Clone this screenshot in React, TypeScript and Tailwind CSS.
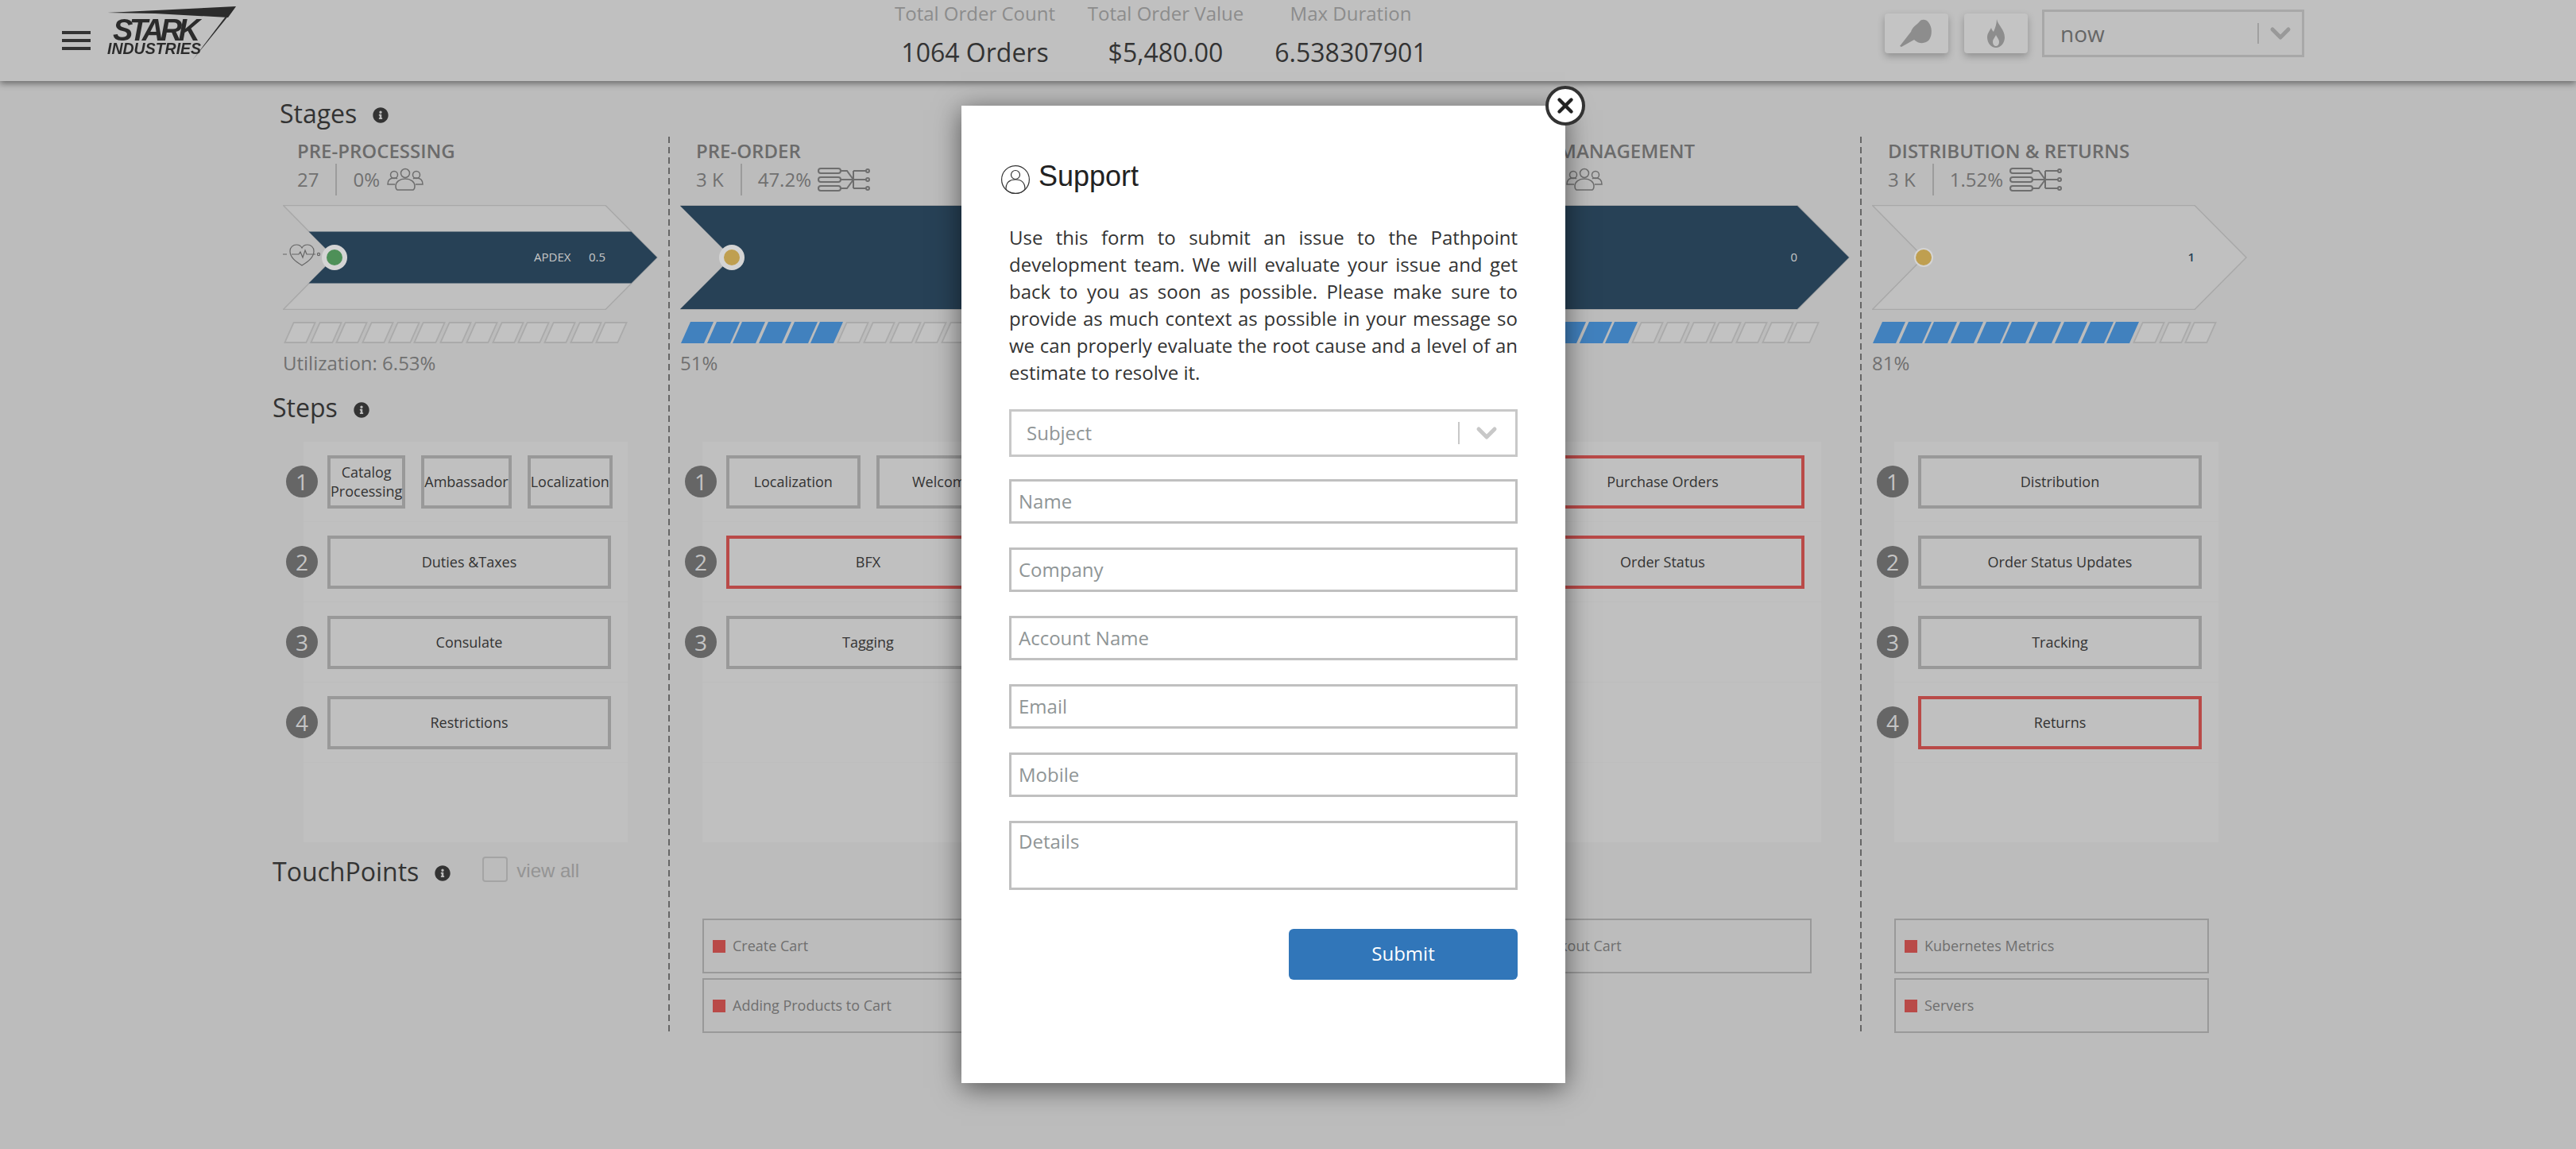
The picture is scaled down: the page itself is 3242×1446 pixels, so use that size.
// App.tsx
import { ChevronDown, X } from 'lucide-react'
import { FaInfoCircle } from 'react-icons/fa'

interface Stage {
  title: string
  titleClass: string
  count: string
  pct: string
  statsClass: string
  icon: 'people' | 'nodes'
  band: number
  dot: string
  ring: number
  value: string
  apdex?: boolean
  blue: number
  label: string
  steps: string[][]
  stepsRed: string[]
  panelClass: string
  touch: string[]
}

const STAGES: (Stage | null)[] = [
  {
    title: 'PRE-PROCESSING', titleClass: 'pl-[33px]', count: '27', pct: '0%', statsClass: 'pl-[33px]', icon: 'people',
    band: 0.5, dot: '#4e9058', ring: 16, value: '0.5', apdex: true, blue: 0, label: 'Utilization: 6.53%',
    steps: [['Catalog Processing', 'Ambassador', 'Localization'], ['Duties &Taxes'], ['Consulate'], ['Restrictions']],
    stepsRed: [], panelClass: 'ml-[41px]', touch: [],
  },
  {
    title: 'PRE-ORDER', titleClass: 'pl-[35px]', count: '3 K', pct: '47.2%', statsClass: 'pl-[35px]', icon: 'nodes',
    band: 1, dot: '#bf9f50', ring: 16, value: '', blue: 6, label: '51%',
    steps: [['Localization', 'Welcome'], ['BFX'], ['Tagging']],
    stepsRed: ['BFX'], panelClass: 'ml-[43px]', touch: ['Create Cart', 'Adding Products to Cart'],
  },
  null,
  {
    title: 'ORDER MANAGEMENT', titleClass: 'pl-[34px]', count: '3 K', pct: '0%', statsClass: 'pl-[10px]', icon: 'people',
    band: 1, dot: '#bf9f50', ring: 16, value: '0', blue: 6, label: '',
    steps: [['Purchase Orders'], ['Order Status']],
    stepsRed: ['Purchase Orders', 'Order Status'], panelClass: 'ml-[43px]', touch: ['Checkout Cart'],
  },
  {
    title: 'DISTRIBUTION & RETURNS', titleClass: 'pl-[35px]', count: '3 K', pct: '1.52%', statsClass: 'pl-[35px]', icon: 'nodes',
    band: 0, dot: '#bf9f50', ring: 12, value: '1', blue: 10, label: '81%',
    steps: [['Distribution'], ['Order Status Updates'], ['Tracking'], ['Returns']],
    stepsRed: ['Returns'], panelClass: 'ml-[43px]', touch: ['Kubernetes Metrics', 'Servers'],
  },
]

function PeopleIcon() {
  return (
    <svg width="46" height="30" viewBox="0 0 46 30" fill="none" stroke="#6e6e6e" strokeWidth="1.5" className="ml-[9px]">
      <circle cx="23" cy="7" r="5.5" />
      <circle cx="9" cy="9" r="4.5" />
      <circle cx="37" cy="9" r="4.5" />
      <path d="M13 28c-2-1-2-3-2-5 0-5 5-9 12-9s12 4 12 9c0 2 0 4-2 5z" fill="#bcbcbc" />
      <path d="M10 21H1c0-5 3-8 8-8 2 0 3 0 4 1" />
      <path d="M36 21h9c0-5-3-8-8-8-2 0-3 0-4 1" />
    </svg>
  )
}

function NodesIcon() {
  return (
    <svg width="66" height="30" viewBox="0 0 66 30" fill="none" stroke="#6e6e6e" strokeWidth="2" className="ml-[8px]">
      <rect x="1" y="1" width="28" height="6" rx="3" />
      <rect x="1" y="12" width="28" height="6" rx="3" />
      <rect x="1" y="23" width="28" height="6" rx="3" />
      <path d="M29 4h8l8 11h16M29 15h32M29 26h8l8-11M45 4h16M45 26h16M45 4v22" />
      <circle cx="63" cy="4" r="2" />
      <circle cx="63" cy="15" r="2" />
      <circle cx="63" cy="26" r="2" />
    </svg>
  )
}

function HeartIcon() {
  return (
    <svg width="48" height="34" viewBox="0 0 48 34" fill="none" stroke="#666" strokeWidth="1.2" className="absolute left-0 top-[47px]">
      <path d="M24 29C16 24 9 19 9 11c0-5 4-8 8-8 3 0 6 2 7 4 1-2 4-4 7-4 4 0 8 3 8 8 0 8-7 13-15 18z" />
      <path d="M0 15h5M11 15h9l2-3 3 7 3-9 2 5h11" />
      <circle cx="45" cy="15" r="1.6" />
    </svg>
  )
}

function InfoIcon() {
  return <FaInfoCircle className="text-[#333] text-[20px]" />
}

function Arrow({ stage }: { stage: Stage }) {
  const y0 = 65 * (1 - stage.band)
  const band = `${y0},${y0 + 1} ${406 + y0},${y0 + 1} 471,66 ${406 + y0},${131 - y0} ${y0},${131 - y0} 65,66`
  return (
    <div className="relative mt-[12px] ml-[15px] h-[132px] w-[474px]">
      <svg width="474" height="132" viewBox="0 0 474 132">
        <polygon points="0.5,0.5 406,0.5 471,66 406,131.5 0.5,131.5 65,66" fill="#c0c0c0" stroke="#a8a8a8" strokeWidth="1.5" />
        {stage.band > 0 && <polygon points={band} fill="#274156" />}
        <circle cx="65" cy="66" r={stage.ring} fill="#d4d4d4" />
        <circle cx="65" cy="66" r="10" fill={stage.dot} />
      </svg>
      {stage.apdex && <HeartIcon />}
      {stage.apdex && (
        <span className="absolute left-[316px] top-[53px] text-[15px] leading-[24px] text-[#c8c8c8]">APDEX</span>
      )}
      {stage.value && (
        <span className={`absolute right-[68px] top-[53px] text-[15px] leading-[24px] ${stage.band > 0 ? 'text-[#c8c8c8]' : 'text-[#274156] font-semibold'}`}>
          {stage.value}
        </span>
      )}
    </div>
  )
}

function StepRow({ num, boxes, red }: { num: number; boxes?: string[]; red: string[] }) {
  return (
    <div className="flex h-[101px] items-center border-b border-[#bdbdbd] pr-[21px] last:border-b-0">
      {boxes && (
        <>
          <div className="-ml-[22px] flex h-[40px] w-[40px] shrink-0 items-center justify-center rounded-full bg-[#666] text-[28px] text-[#c4c4c4]">
            {num}
          </div>
          <div className="ml-[12px] flex flex-1 gap-[20px]">
            {boxes.map(b => (
              <div
                key={b}
                className={`flex h-[67px] items-center justify-center border-[4px] text-center text-[18px] leading-[24px] text-[#333] ${
                  boxes.length === 3 ? 'flex-auto' : 'flex-1'
                } ${red.includes(b) ? 'border-[#b94a48]' : 'border-[#999]'}`}
              >
                {b}
              </div>
            ))}
          </div>
        </>
      )}
    </div>
  )
}

function StageColumn({ stage, first }: { stage: Stage | null; first: boolean }) {
  const dashed = first
    ? 'w-[500px] h-[1130px] shrink-0'
    : 'w-[500px] h-[1130px] shrink-0 bg-[repeating-linear-gradient(to_bottom,#666_0_8px,transparent_8px_13px)] bg-[length:2px_100%] bg-no-repeat'

  if (!stage) return <div className={dashed} />

  return (
    <div className={dashed}>
      <div className={`flex h-[34px] items-start pt-[2px] text-[24px] leading-[32px] font-semibold whitespace-nowrap text-[#6b6b6b] ${stage.titleClass}`}>
        {stage.title}
      </div>
      <div className={`flex h-[40px] items-center text-[24px] text-[#707070] ${stage.statsClass}`}>
        <span className="flex h-full items-center border-r-2 border-[#9c9c9c] pr-[21px]">{stage.count}</span>
        <span className="pl-[20px]">{stage.pct}</span>
        {stage.icon === 'people' ? <PeopleIcon /> : <NodesIcon />}
      </div>

      <Arrow stage={stage} />

      <div className="mt-[15px] ml-[22px] flex h-[27px] gap-[4px]">
        {Array.from({ length: 13 }, (_, i) => (
          <div
            key={i}
            className={`h-full w-[28.7px] -skew-x-[24deg] ${i < stage.blue ? 'bg-[#4181be]' : 'border-2 border-[#aaa] bg-[#c2c2c2]'}`}
          />
        ))}
      </div>

      <div className="mt-[8px] flex h-[34px] items-center pl-[15px] text-[24px] text-[#707070]">{stage.label}</div>

      <div className="flex h-[82px] items-center pb-[4px] pl-[2px] text-[32px] text-[#333]">
        {first && (
          <>
            Steps
            <span className="ml-[20px] mt-[6px]"><InfoIcon /></span>
          </>
        )}
      </div>

      <div className={`h-[504px] w-[408px] bg-[#c0c0c0] ${stage.panelClass}`}>
        {[0, 1, 2, 3, 4].map(i => (
          <StepRow key={i} num={i + 1} boxes={stage.steps[i]} red={stage.stepsRed} />
        ))}
      </div>

      <div className="flex h-[96px] items-start pl-[2px] pt-[15px] text-[32px] leading-[44px] text-[#333]">
        {first && (
          <>
            TouchPoints
            <span className="ml-[20px] mt-[14px]"><InfoIcon /></span>
            <span className="ml-[40px] mt-[3px] h-[32px] w-[32px] rounded-[4px] border-2 border-[#a4a4a4]" />
            <span className="ml-[11px] mt-[3px] font-['Liberation_Sans',sans-serif] text-[24px] leading-[36px] text-[#949494]">view all</span>
          </>
        )}
      </div>

      <div className={`flex w-[396px] flex-col gap-[6px] ${stage.panelClass}`}>
        {stage.touch.map(t => (
          <div key={t} className="flex h-[69px] items-center gap-[9px] border-2 border-[#999] pl-[11px] text-[18px] text-[#6f6f6f]">
            <span className="h-[16px] w-[16px] bg-[#b94a48]" />
            {t}
          </div>
        ))}
      </div>
    </div>
  )
}

function Logo() {
  return (
    <div className="relative ml-[21px] mt-[7px] h-[70px] w-[165px] self-start blur-[0.6px] font-['Liberation_Sans',sans-serif] font-bold italic text-[#2b2b2b]">
      <svg width="165" height="70" viewBox="0 0 165 70" className="absolute inset-0" fill="#2b2b2b">
        <polygon points="0,9 162,1 152,15 60,10" />
        <polygon points="162,1 107,69 148,15" />
      </svg>
      <span className="absolute left-[7px] top-[15px] text-[38px] leading-[32px] tracking-[-4.5px]">STARK</span>
      <span className="absolute left-0 top-[47px] text-[19.5px] leading-[15px]">INDUSTRIES</span>
    </div>
  )
}

function HeaderStat({ label, value, className }: { label: string; value: string; className: string }) {
  return (
    <div className={`flex flex-col items-center whitespace-nowrap ${className}`}>
      <span className="text-[24px] leading-[34px] text-[#8c8c8c]">{label}</span>
      <span className="mt-[15px] text-[32px] leading-[34px] text-[#333]">{value}</span>
    </div>
  )
}

function Header() {
  return (
    <header className="relative flex h-[102px] items-center bg-[#c0c0c0] shadow-[0_3px_8px_rgba(0,0,0,0.45)]">
      <button className="ml-[78px] flex w-[36px] flex-col gap-[6px]">
        <span className="h-[4px] bg-[#333]" />
        <span className="h-[4px] bg-[#333]" />
        <span className="h-[4px] bg-[#333]" />
      </button>
      <Logo />

      <div className="ml-[827px] flex self-start">
        <HeaderStat label="Total Order Count" value="1064 Orders" className="w-[200px]" />
        <HeaderStat label="Total Order Value" value="$5,480.00" className="ml-[42px] w-[196px]" />
        <HeaderStat label="Max Duration" value="6.538307901" className="ml-[40px] w-[190px]" />
      </div>

      <div className="ml-[577px] mt-[12px] flex items-center gap-[20px] self-start">
        <div className="flex h-[50px] w-[80px] items-center justify-center rounded-[4px] bg-[#c4c4c4] shadow-[0_4px_10px_rgba(0,0,0,0.25)]">
          <svg width="42" height="36" viewBox="0 0 42 36" fill="#8d8d8d">
            <path d="M0 34L14 16C16 10 20 8 22 6L25 3C27 0 33 0 36 4C41 10 41 20 37 26C33 31 24 32 18 26L2 35Z" />
          </svg>
        </div>
        <div className="flex h-[50px] w-[80px] items-center justify-center rounded-[4px] bg-[#c4c4c4] shadow-[0_4px_10px_rgba(0,0,0,0.25)]">
          <svg width="24" height="36" viewBox="0 0 24 36" fill="#8d8d8d">
            <path d="M13 0c1 7 10 13 10 23 0 7-5 13-11 13S1 30 1 23c0-5 3-8 5-12 1 3 2 4 3 5 2-5 4-10 4-16zM12 20c-1 3-4 5-4 9 0 3 2 5 4 5s4-2 4-5c0-4-3-6-4-9z" fillRule="evenodd" />
          </svg>
        </div>
        <div className="-ml-[2px] flex h-[60px] w-[330px] items-center border-[3px] border-[#a8a8a8] pl-[20px] text-[28px] text-[#666]">
          <span className="flex-1">now</span>
          <span className="h-[26px] w-[2px] bg-[#a0a0a0]" />
          <ChevronDown className="mx-[7px] h-[40px] w-[40px] text-[#999]" strokeWidth={3} />
        </div>
      </div>
    </header>
  )
}

function Field({ placeholder }: { placeholder: string }) {
  return (
    <input
      placeholder={placeholder}
      className="h-[56px] w-full border-[3px] border-[#c0c0c0] bg-white px-[9px] pb-[2px] text-[24px] placeholder:text-[#8f9596] focus:outline-none"
    />
  )
}

function SupportModal() {
  return (
    <div className="absolute left-[1210px] top-[133px] h-[1230px] w-[760px] bg-white px-[60px] pt-[71px] shadow-[0_6px_32px_rgba(0,0,0,0.55)]">
      <button className="absolute -right-[25px] -top-[25px] flex h-[50px] w-[50px] items-center justify-center rounded-full border-[4px] border-[#333] bg-white">
        <X className="h-[30px] w-[30px] text-[#222]" strokeWidth={3.5} />
      </button>

      <div className="-ml-[10px] flex h-[36px] items-center gap-[11px]">
        <svg width="36" height="36" viewBox="0 0 36 36" fill="none" stroke="#333" strokeWidth="1.2" className="mt-[8px]">
          <circle cx="18" cy="18" r="17.4" />
          <circle cx="18" cy="12" r="5.5" />
          <path d="M6 30c0-7 3-12 12-12s12 5 12 12" />
          <path d="M6 30c3 4 8 5.500 12 5.500s9-1.500 12-5.500" />
        </svg>
        <h2 className="font-['Liberation_Sans',sans-serif] text-[36px] leading-[40px] text-[#222]">Support</h2>
      </div>

      <p className="mt-[42px] text-justify text-[24px] leading-[34px] text-[#333]">
        Use this form to submit an issue to the Pathpoint development team. We will evaluate your issue and get back to you as soon as possible. Please make sure to provide as much context as possible in your message so we can properly evaluate the root cause and a level of an estimate to resolve it.
      </p>

      <div className="mt-[29px] flex h-[60px] items-center border-[3px] border-[#c8c8c8] pl-[19px] text-[24px] text-[#8f9596]">
        <span className="flex-1">Subject</span>
        <span className="h-[28px] w-[2px] bg-[#c8c8c8]" />
        <ChevronDown className="ml-[14px] mr-[16px] h-[40px] w-[40px] text-[#c8c8c8]" strokeWidth={3} />
      </div>

      <div className="mt-[28px] flex flex-col gap-[30px]">
        <Field placeholder="Name" />
        <Field placeholder="Company" />
        <Field placeholder="Account Name" />
        <Field placeholder="Email" />
        <Field placeholder="Mobile" />
        <textarea
          placeholder="Details"
          className="h-[87px] w-full resize-none border-[3px] border-[#c0c0c0] bg-white px-[9px] py-[5px] text-[24px] placeholder:text-[#8f9596] focus:outline-none"
        />
      </div>

      <div className="mt-[49px] flex justify-end">
        <button className="h-[64px] w-[288px] rounded-[6px] bg-[#3176b9] pb-[2px] text-[24px] font-medium text-white">Submit</button>
      </div>
    </div>
  )
}

export default function App() {
  return (
    <div className="relative h-[1446px] w-[3242px] overflow-hidden bg-[#bcbcbc] font-['Open_Sans',sans-serif]">
      <Header />
      <div className="flex h-[70px] items-start gap-[20px] pl-[352px] pt-[21px] text-[32px] leading-[40px] text-[#333]">
        Stages
        <span className="mt-[12px]"><InfoIcon /></span>
      </div>
      <div className="flex pl-[341px]">
        {STAGES.map((s, i) => (
          <StageColumn key={i} stage={s} first={i === 0} />
        ))}
      </div>
      <SupportModal />
    </div>
  )
}
